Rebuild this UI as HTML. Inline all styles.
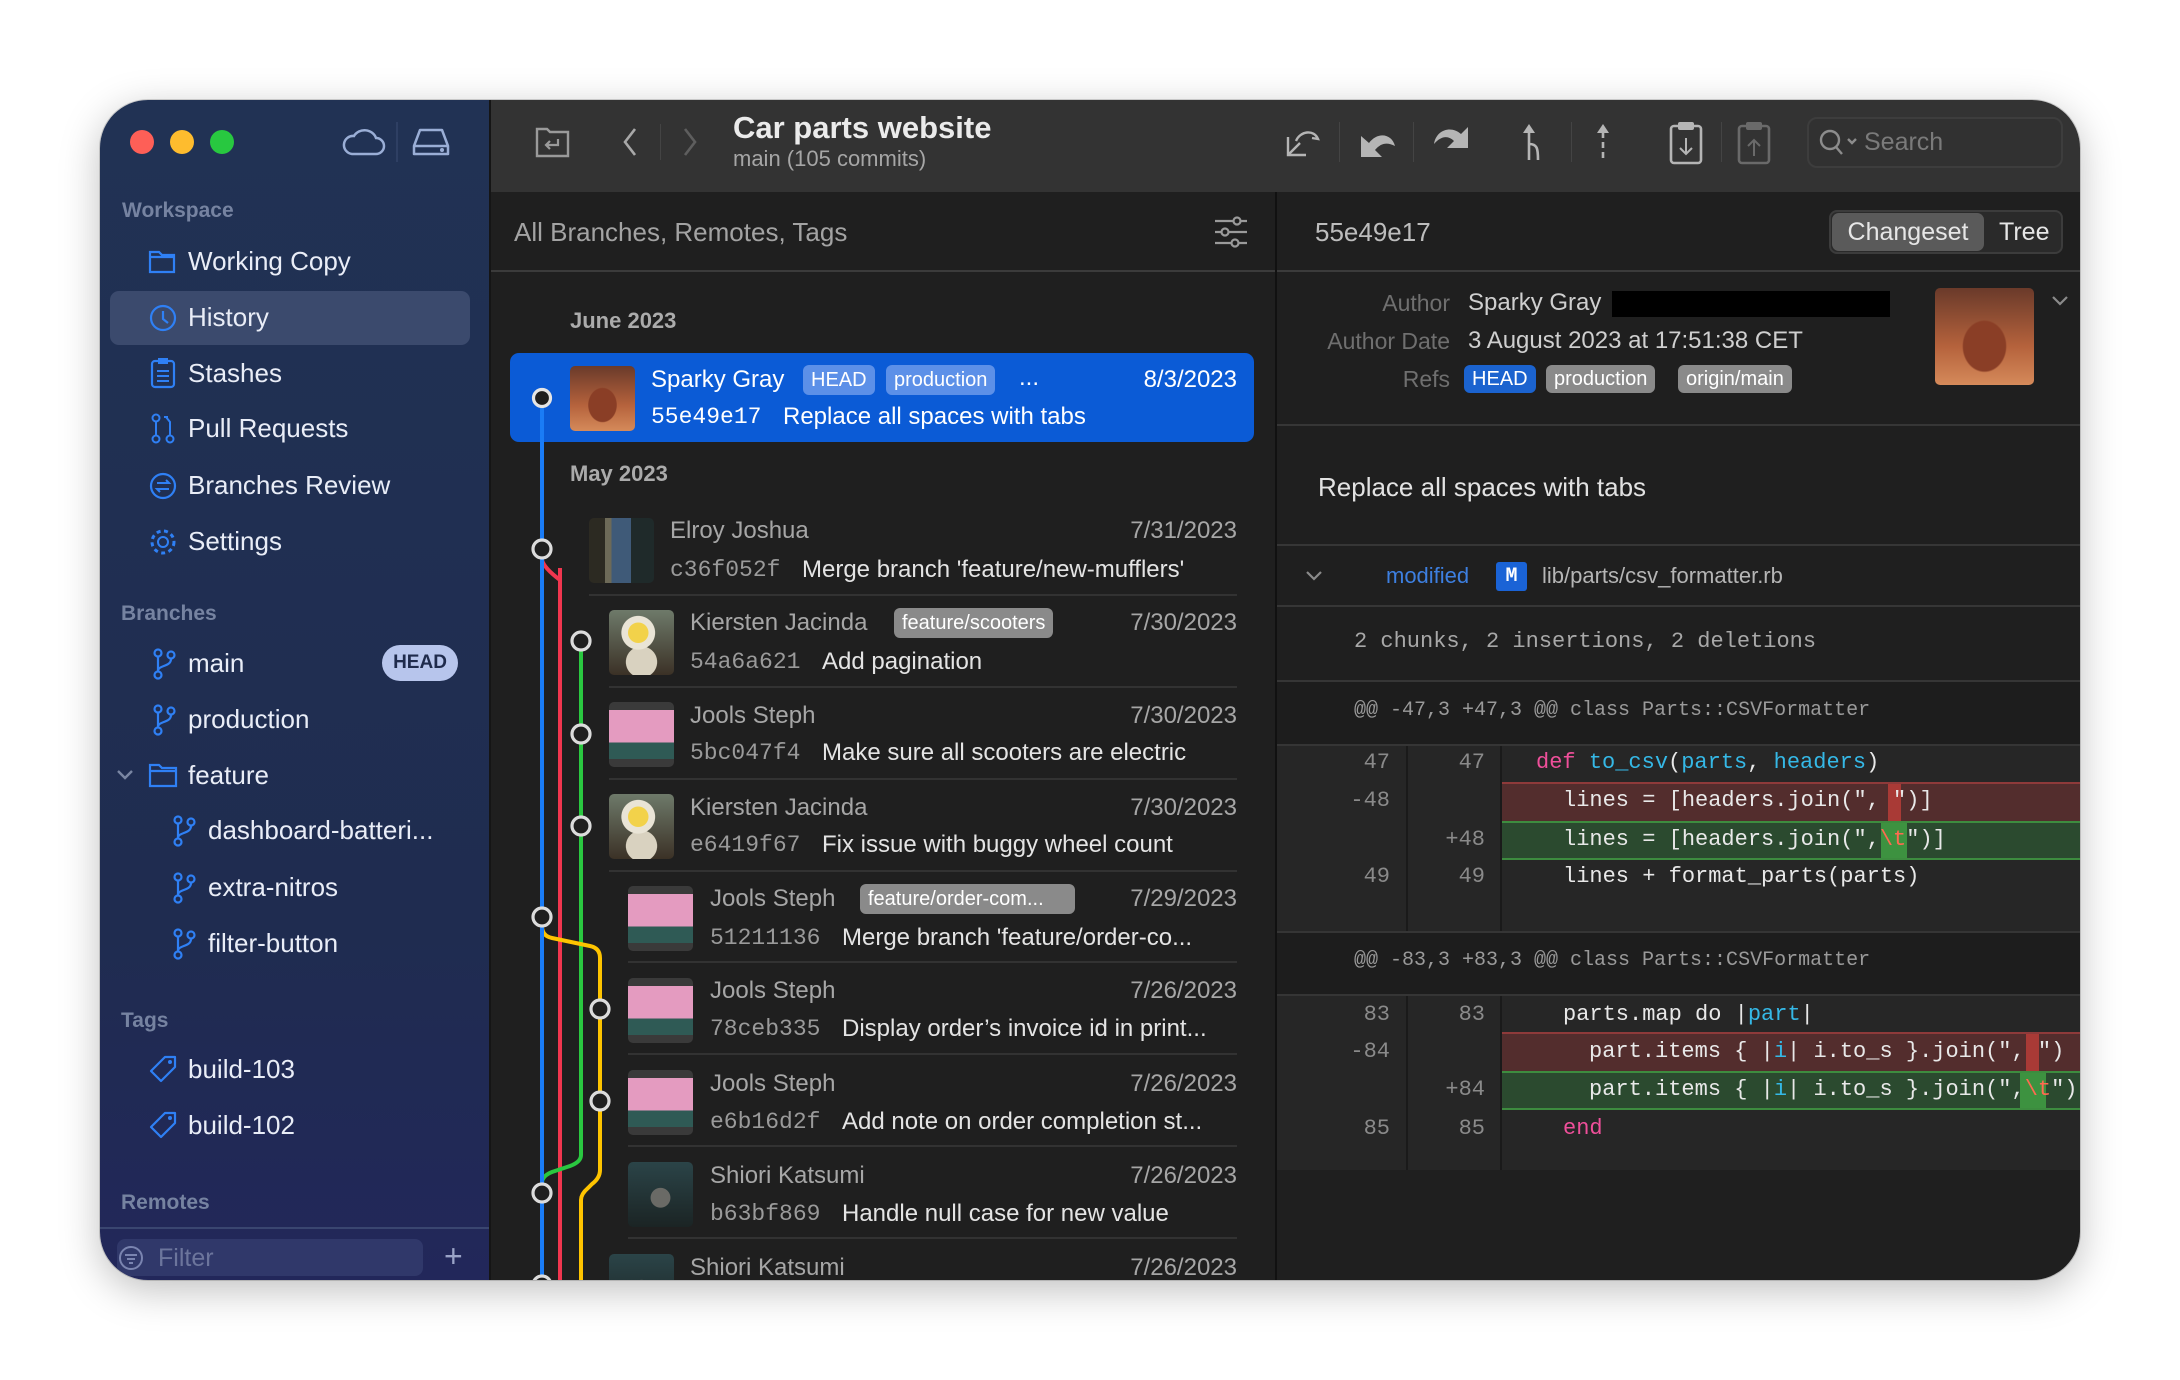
<!DOCTYPE html>
<html><head><meta charset="utf-8"><style>
*{margin:0;padding:0;box-sizing:border-box}
body{width:2180px;height:1380px;background:#fff;font-family:"Liberation Sans",sans-serif;position:relative;overflow:hidden}
#win{position:absolute;left:100px;top:100px;width:1980px;height:1180px;border-radius:48px;overflow:hidden;box-shadow:0 10px 40px rgba(0,0,0,.25),0 0 0 1px rgba(0,0,0,.15)}
#in{position:absolute;left:-100px;top:-100px;width:2180px;height:1380px}
.a{position:absolute;white-space:nowrap}
.t{position:absolute;white-space:nowrap;line-height:32px;height:32px}
.m{font-family:"Liberation Mono",monospace}
.side{color:#e9edf7;font-size:26px}
.sh{color:#7683a1;font-size:21px;font-weight:bold}
.nm{color:#a6a6a6;font-size:24px}
.hs{color:#9a9a9a;font-size:23px;font-family:"Liberation Mono",monospace}
.ms{color:#e4e4e4;font-size:24px}
.dt{color:#a6a6a6;font-size:24px;text-align:right;width:200px}
.pill{position:absolute;height:30px;line-height:30px;border-radius:6px;font-size:20px;color:#fff;padding:0 8px;background:#8a8a8a;white-space:nowrap;overflow:hidden}
.av{position:absolute;width:65px;height:65px;border-radius:5px;overflow:hidden}
.sep{position:absolute;height:2px;background:#323232}
.pink{background:linear-gradient(180deg,#3a3a3a 0 12%,#e49bc0 12% 62%,#2f5a55 62% 88%,#3a3a3a 88%)}
.helm{background:radial-gradient(circle at 45% 35%,#f2d24a 0 18%,#e9e4d6 19% 30%,transparent 31%),radial-gradient(circle at 50% 80%,#d9d2c0 0 25%,transparent 26%),linear-gradient(#6e7a6a,#3b3126)}
.shi{background:radial-gradient(circle at 50% 55%,#6a6a66 0 20%,transparent 21%),linear-gradient(#2b4448,#1b2424)}
.elr{background:linear-gradient(90deg,#2c2a22 0 25%,#6d6a58 25% 35%,#3f5a78 35% 65%,#1f2a2a 65%)}
.car{background:radial-gradient(ellipse at 50% 60%,#8a3e26 0 30%,transparent 32%),linear-gradient(#6a3a2a,#b5623c 60%,#d58a5a)}
.code{position:absolute;font-family:"Liberation Mono",monospace;font-size:22px;color:#e8e8e8;line-height:38px;height:38px;white-space:pre}
.ln{position:absolute;font-family:"Liberation Mono",monospace;font-size:22px;color:#8a8a8a;line-height:38px;height:38px;text-align:right;width:60px}
</style></head><body>
<div id="win"><div id="in">
<div class="a" style="left:100px;top:100px;width:389px;height:1180px;background:linear-gradient(180deg,#213254 0%,#1f2c50 70%,#22275a 100%)"></div>
<div class="a" style="left:130px;top:130px;width:24px;height:24px;border-radius:50%;background:#fe5f57"></div>
<div class="a" style="left:170px;top:130px;width:24px;height:24px;border-radius:50%;background:#febc2e"></div>
<div class="a" style="left:210px;top:130px;width:24px;height:24px;border-radius:50%;background:#28c840"></div>
<svg class="a" style="left:342px;top:126px" width="44" height="32" viewBox="0 0 44 32"><path d="M10 28 H34 a8 8 0 0 0 0-16 a12 11 0 0 0-22-2 a9 9 0 0 0-2 18z" fill="none" stroke="#9aaed6" stroke-width="2.5"/></svg>
<div class="a" style="left:396px;top:122px;width:2px;height:40px;background:#2e3f63"></div>
<svg class="a" style="left:410px;top:126px" width="42" height="32" viewBox="0 0 42 32"><path d="M4 20 L10 4 H32 L38 20 M4 20 H38 V28 H4z" fill="none" stroke="#9aaed6" stroke-width="2.5" stroke-linejoin="round"/><circle cx="32" cy="24" r="2" fill="#9aaed6"/></svg>

<div class="t sh" style="left:122px;top:195px">Workspace</div>
<div class="a" style="left:110px;top:291px;width:360px;height:54px;border-radius:9px;background:#3b4a6d"></div>
<svg class="a" style="left:148px;top:248px" width="28" height="26"><path d="M2 4h9l3 3h12v17H2z M2 9h24" fill="none" stroke="#2f80f5" stroke-width="2.2"/></svg>
<svg class="a" style="left:148px;top:303px" width="30" height="30"><circle cx="15" cy="15" r="12" fill="none" stroke="#2f80f5" stroke-width="2.2"/><path d="M15 8v8l5 4" fill="none" stroke="#2f80f5" stroke-width="2.2"/></svg>
<svg class="a" style="left:150px;top:357px" width="26" height="32"><rect x="2" y="4" width="22" height="26" rx="3" fill="none" stroke="#2f80f5" stroke-width="2.2"/><rect x="8" y="1" width="10" height="6" fill="#2f80f5"/><path d="M7 14h12M7 19h12M7 24h12" stroke="#2f80f5" stroke-width="2"/></svg>
<svg class="a" style="left:150px;top:412px" width="26" height="32"><circle cx="6" cy="6" r="3.5" fill="none" stroke="#2f80f5" stroke-width="2"/><circle cx="6" cy="27" r="3.5" fill="none" stroke="#2f80f5" stroke-width="2"/><circle cx="20" cy="27" r="3.5" fill="none" stroke="#2f80f5" stroke-width="2"/><path d="M6 10v13M20 23V10l-4-5M14 5h4" fill="none" stroke="#2f80f5" stroke-width="2"/></svg>
<svg class="a" style="left:148px;top:471px" width="30" height="30"><circle cx="15" cy="15" r="12" fill="none" stroke="#2f80f5" stroke-width="2.2"/><path d="M9 12h12l-3-3M21 18H9l3 3" fill="none" stroke="#2f80f5" stroke-width="2"/></svg>
<svg class="a" style="left:147px;top:526px" width="32" height="32"><circle cx="16" cy="16" r="5" fill="none" stroke="#2f80f5" stroke-width="2"/><circle cx="16" cy="16" r="11" fill="none" stroke="#2f80f5" stroke-width="3" stroke-dasharray="4 3.5"/></svg>
<div class="t side" style="left:188px;top:245px">Working Copy</div>
<div class="t side" style="left:188px;top:301px">History</div>
<div class="t side" style="left:188px;top:357px">Stashes</div>
<div class="t side" style="left:188px;top:412px">Pull Requests</div>
<div class="t side" style="left:188px;top:469px">Branches Review</div>
<div class="t side" style="left:188px;top:525px">Settings</div>

<div class="t sh" style="left:121px;top:598px">Branches</div>
<svg class="a" style="left:152px;top:648px" width="24" height="32"><g fill="none" stroke="#2f80f5" stroke-width="2.2"><circle cx="6" cy="5" r="3.5"/><circle cx="6" cy="27" r="3.5"/><circle cx="19" cy="7" r="3.5"/><path d="M6 9v14M19 11c0 8-13 6-13 12"/></g></svg>
<svg class="a" style="left:152px;top:704px" width="24" height="32"><g fill="none" stroke="#2f80f5" stroke-width="2.2"><circle cx="6" cy="5" r="3.5"/><circle cx="6" cy="27" r="3.5"/><circle cx="19" cy="7" r="3.5"/><path d="M6 9v14M19 11c0 8-13 6-13 12"/></g></svg>
<svg class="a" style="left:116px;top:768px" width="18" height="14"><path d="M2 3l7 7 7-7" fill="none" stroke="#7a86a3" stroke-width="2.4"/></svg>
<svg class="a" style="left:148px;top:762px" width="30" height="26"><path d="M2 3h9l3 3h14v18H2z M2 9h26" fill="none" stroke="#2f80f5" stroke-width="2.2"/></svg>
<svg class="a" style="left:172px;top:815px" width="24" height="32"><g fill="none" stroke="#2f80f5" stroke-width="2.2"><circle cx="6" cy="5" r="3.5"/><circle cx="6" cy="27" r="3.5"/><circle cx="19" cy="7" r="3.5"/><path d="M6 9v14M19 11c0 8-13 6-13 12"/></g></svg>
<svg class="a" style="left:172px;top:872px" width="24" height="32"><g fill="none" stroke="#2f80f5" stroke-width="2.2"><circle cx="6" cy="5" r="3.5"/><circle cx="6" cy="27" r="3.5"/><circle cx="19" cy="7" r="3.5"/><path d="M6 9v14M19 11c0 8-13 6-13 12"/></g></svg>
<svg class="a" style="left:172px;top:928px" width="24" height="32"><g fill="none" stroke="#2f80f5" stroke-width="2.2"><circle cx="6" cy="5" r="3.5"/><circle cx="6" cy="27" r="3.5"/><circle cx="19" cy="7" r="3.5"/><path d="M6 9v14M19 11c0 8-13 6-13 12"/></g></svg>
<div class="t side" style="left:188px;top:647px">main</div>
<div class="a" style="left:382px;top:645px;width:76px;height:36px;border-radius:18px;background:#b7c5ec;color:#1f2b4c;font-size:19px;font-weight:bold;text-align:center;line-height:36px">HEAD</div>
<div class="t side" style="left:188px;top:703px">production</div>
<div class="t side" style="left:188px;top:759px">feature</div>
<div class="t side" style="left:208px;top:814px">dashboard-batteri...</div>
<div class="t side" style="left:208px;top:871px">extra-nitros</div>
<div class="t side" style="left:208px;top:927px">filter-button</div>

<div class="t sh" style="left:121px;top:1005px">Tags</div>
<svg class="a" style="left:147px;top:1053px" width="32" height="32"><path d="M4 18 L18 4 H28 V14 L14 28 z" fill="none" stroke="#2f80f5" stroke-width="2.2" stroke-linejoin="round"/><circle cx="23" cy="9" r="2" fill="#2f80f5"/></svg>
<svg class="a" style="left:147px;top:1109px" width="32" height="32"><path d="M4 18 L18 4 H28 V14 L14 28 z" fill="none" stroke="#2f80f5" stroke-width="2.2" stroke-linejoin="round"/><circle cx="23" cy="9" r="2" fill="#2f80f5"/></svg>
<div class="t side" style="left:188px;top:1053px">build-103</div>
<div class="t side" style="left:188px;top:1109px">build-102</div>
<div class="t sh" style="left:121px;top:1187px">Remotes</div>
<div class="a" style="left:100px;top:1227px;width:389px;height:2px;background:#3a4670"></div>
<div class="a" style="left:117px;top:1239px;width:306px;height:37px;border-radius:8px;background:#30386a"></div>
<svg class="a" style="left:118px;top:1245px" width="26" height="26"><circle cx="13" cy="13" r="11" fill="none" stroke="#7a84b0" stroke-width="2"/><path d="M7 10h12M9 14h8M11 18h4" stroke="#7a84b0" stroke-width="2"/></svg>
<div class="t" style="left:158px;top:1242px;font-size:25px;color:#6c759c">Filter</div>
<div class="t" style="left:444px;top:1240px;font-size:32px;color:#9aa3c7">+</div>

<div class="a" style="left:489px;top:100px;width:1591px;height:92px;background:#333"></div>
<div class="a" style="left:489px;top:100px;width:2px;height:1180px;background:#151515"></div>
<svg class="a" style="left:534px;top:124px" width="38" height="36"><path d="M3 5h10l3 3h18v24H3z" fill="none" stroke="#9a9a9a" stroke-width="2.4"/><path d="M24 15v6H13m3-4-4 4 4 4" fill="none" stroke="#9a9a9a" stroke-width="2.2"/></svg>
<svg class="a" style="left:620px;top:126px" width="20" height="32"><path d="M15 3L5 16l10 13" fill="none" stroke="#a8a8a8" stroke-width="2.6"/></svg>
<div class="a" style="left:660px;top:124px;width:1px;height:36px;background:#444"></div>
<svg class="a" style="left:680px;top:126px" width="20" height="32"><path d="M5 3l10 13L5 29" fill="none" stroke="#5e5e5e" stroke-width="2.6"/></svg>
<div class="a" style="left:733px;top:108px;font-size:31px;font-weight:bold;color:#ebebeb;line-height:40px">Car parts website</div>
<div class="a" style="left:733px;top:145px;font-size:22px;color:#a6a6a6;line-height:28px">main (105 commits)</div>
<svg class="a" style="left:1284px;top:125px" width="38" height="34"><path d="M4 12v18h18 M4 30 L16 18 M12 16 c4-10 18-12 22-2 l-6 -1" fill="none" stroke="#b5b5b5" stroke-width="2.4"/></svg>
<div class="a" style="left:1339px;top:122px;width:1px;height:40px;background:#444"></div>
<svg class="a" style="left:1358px;top:124px" width="40" height="36"><path d="M3 12 V33 H24 L17 26 C23 19 29 18 37 22 C34 10 20 7 11 19 Z" fill="#b5b5b5"/></svg>
<div class="a" style="left:1413px;top:122px;width:1px;height:40px;background:#444"></div>
<svg class="a" style="left:1431px;top:124px" width="40" height="36"><path d="M37 3 V24 H16 L23 17 C17 11 10 12 3 20 C5 6 20 1 30 10 Z" fill="#b5b5b5"/></svg>
<svg class="a" style="left:1520px;top:122px" width="26" height="40"><path d="M9 2l-6 9h12z" fill="#b5b5b5"/><path d="M9 10v28 M9 22c8 0 9 4 9 16" fill="none" stroke="#b5b5b5" stroke-width="2.6"/></svg>
<div class="a" style="left:1571px;top:122px;width:1px;height:40px;background:#444"></div>
<svg class="a" style="left:1592px;top:122px" width="22" height="42"><path d="M11 2l-6 9h12z" fill="#b5b5b5"/><path d="M11 10v30" stroke="#b5b5b5" stroke-width="2.6" stroke-dasharray="6 4"/></svg>
<svg class="a" style="left:1668px;top:120px" width="36" height="46"><rect x="3" y="6" width="30" height="37" rx="3" fill="none" stroke="#b5b5b5" stroke-width="2.6"/><rect x="10" y="2" width="16" height="8" rx="2" fill="#b5b5b5"/><path d="M18 18v16m-6-6 6 6 6-6" fill="none" stroke="#b5b5b5" stroke-width="2"/></svg>
<div class="a" style="left:1721px;top:122px;width:1px;height:40px;background:#444"></div>
<svg class="a" style="left:1736px;top:120px" width="36" height="46"><rect x="3" y="6" width="30" height="37" rx="3" fill="none" stroke="#6a6a6a" stroke-width="2.6"/><rect x="10" y="2" width="16" height="8" rx="2" fill="#6a6a6a"/><path d="M18 36V20m-6 6 6-6 6 6" fill="none" stroke="#6a6a6a" stroke-width="2"/></svg>
<div class="a" style="left:1807px;top:117px;width:256px;height:51px;border-radius:10px;border:2px solid #3d3d3d;background:#313131"></div>
<svg class="a" style="left:1818px;top:128px" width="44" height="30"><circle cx="12" cy="12" r="9" fill="none" stroke="#8c8c8c" stroke-width="2.4"/><path d="M18 19l6 7M30 11l4 4 4-4" fill="none" stroke="#8c8c8c" stroke-width="2.4"/></svg>
<div class="a" style="left:1864px;top:126px;font-size:25px;color:#7a7a7a;line-height:32px">Search</div>

<div class="a" style="left:491px;top:192px;width:784px;height:1088px;background:#1f1f1f"></div>
<div class="a" style="left:514px;top:216px;font-size:26px;color:#a3a3a3;line-height:32px">All Branches, Remotes, Tags</div>
<svg class="a" style="left:1213px;top:214px" width="36" height="36"><g stroke="#9a9a9a" stroke-width="2.2" fill="#1f1f1f"><path d="M2 7h32M2 18h32M2 29h32"/><circle cx="24" cy="7" r="3.5"/><circle cx="12" cy="18" r="3.5"/><circle cx="22" cy="29" r="3.5"/></g></svg>
<div class="a" style="left:491px;top:270px;width:784px;height:2px;background:#3b3b3b"></div>
<div class="a" style="left:570px;top:306px;font-size:22px;font-weight:bold;color:#ababab;line-height:30px">June 2023</div>
<div class="a" style="left:510px;top:353px;width:744px;height:89px;border-radius:9px;background:#0b5bd6"></div>
<div class="av car" style="left:570px;top:366px"></div>
<div class="t" style="left:651px;top:364px;font-size:24px;color:#fff">Sparky Gray</div>
<div class="pill" style="left:803px;top:365px;background:#5c90e8">HEAD</div>
<div class="pill" style="left:886px;top:365px;background:#5c90e8">production</div>
<div class="t" style="left:1019px;top:362px;font-size:24px;color:#fff">...</div>
<div class="t dt" style="left:1037px;top:364px;color:#fff">8/3/2023</div>
<div class="t" style="left:651px;top:401px;font-size:23px;color:#fff;font-family:'Liberation Mono',monospace">55e49e17</div>
<div class="t" style="left:783px;top:401px;font-size:24px;color:#fff">Replace all spaces with tabs</div>
<div class="a" style="left:570px;top:459px;font-size:22px;font-weight:bold;color:#ababab;line-height:30px">May 2023</div>

<svg class="a" style="left:491px;top:192px" width="200" height="1088" viewBox="491 192 200 1088">
<g fill="none" stroke-width="4">
<path d="M560 568 C560 575 560 580 560 590 V1290" stroke="#f0364f"/>
<path d="M542 560 Q544 568 560 580" stroke="#f0364f"/>
<path d="M581 641 V1155 Q581 1162 570 1166 L552 1172 Q542 1176 542 1183" stroke="#2ac840"/>
<path d="M542 926 Q542 936 552 938 L590 946 Q600 948 600 958 V1170 Q600 1178 592 1184 L588 1188 Q581 1194 581 1200 V1290" stroke="#fec400"/>
<path d="M542 398 V1290" stroke="#1a7cf6"/>
</g>
<g fill="#1f1f1f" stroke="#dcdcdc" stroke-width="3.2">
<circle cx="542" cy="549" r="9"/><circle cx="581" cy="641" r="9"/><circle cx="581" cy="734" r="9"/><circle cx="581" cy="826" r="9"/><circle cx="542" cy="917" r="9"/><circle cx="600" cy="1009" r="9"/><circle cx="600" cy="1101" r="9"/><circle cx="542" cy="1193" r="9"/><circle cx="542" cy="1285" r="9"/>
</g>
</svg>
<svg class="a" style="left:530px;top:386px" width="24" height="24"><circle cx="12" cy="12" r="8.5" fill="#1f1f1f" stroke="#e5e5e5" stroke-width="3.2"/></svg>

<div class="av elr" style="left:589px;top:518px"></div>
<div class="t nm" style="left:670px;top:515px">Elroy Joshua</div><div class="t dt" style="left:1037px;top:515px">7/31/2023</div>
<div class="t hs" style="left:670px;top:554px">c36f052f</div><div class="t ms" style="left:802px;top:554px">Merge branch 'feature/new-mufflers'</div>
<div class="sep" style="left:589px;top:594px;width:648px"></div>

<div class="av helm" style="left:609px;top:610px"></div>
<div class="t nm" style="left:690px;top:607px">Kiersten Jacinda</div><div class="pill" style="left:894px;top:608px">feature/scooters</div><div class="t dt" style="left:1037px;top:607px">7/30/2023</div>
<div class="t hs" style="left:690px;top:646px">54a6a621</div><div class="t ms" style="left:822px;top:646px">Add pagination</div>
<div class="sep" style="left:609px;top:686px;width:628px"></div>

<div class="av pink" style="left:609px;top:702px"></div>
<div class="t nm" style="left:690px;top:700px">Jools Steph</div><div class="t dt" style="left:1037px;top:700px">7/30/2023</div>
<div class="t hs" style="left:690px;top:737px">5bc047f4</div><div class="t ms" style="left:822px;top:737px">Make sure all scooters are electric</div>
<div class="sep" style="left:609px;top:778px;width:628px"></div>

<div class="av helm" style="left:609px;top:794px"></div>
<div class="t nm" style="left:690px;top:792px">Kiersten Jacinda</div><div class="t dt" style="left:1037px;top:792px">7/30/2023</div>
<div class="t hs" style="left:690px;top:829px">e6419f67</div><div class="t ms" style="left:822px;top:829px">Fix issue with buggy wheel count</div>
<div class="sep" style="left:609px;top:870px;width:628px"></div>

<div class="av pink" style="left:628px;top:886px"></div>
<div class="t nm" style="left:710px;top:883px">Jools Steph</div><div class="pill" style="left:860px;top:884px;width:215px">feature/order-com...</div><div class="t dt" style="left:1037px;top:883px">7/29/2023</div>
<div class="t hs" style="left:710px;top:922px">51211136</div><div class="t ms" style="left:842px;top:922px">Merge branch 'feature/order-co...</div>
<div class="sep" style="left:628px;top:961px;width:609px"></div>

<div class="av pink" style="left:628px;top:978px"></div>
<div class="t nm" style="left:710px;top:975px">Jools Steph</div><div class="t dt" style="left:1037px;top:975px">7/26/2023</div>
<div class="t hs" style="left:710px;top:1013px">78ceb335</div><div class="t ms" style="left:842px;top:1013px">Display order’s invoice id in print...</div>
<div class="sep" style="left:628px;top:1053px;width:609px"></div>

<div class="av pink" style="left:628px;top:1070px"></div>
<div class="t nm" style="left:710px;top:1068px">Jools Steph</div><div class="t dt" style="left:1037px;top:1068px">7/26/2023</div>
<div class="t hs" style="left:710px;top:1106px">e6b16d2f</div><div class="t ms" style="left:842px;top:1106px">Add note on order completion st...</div>
<div class="sep" style="left:628px;top:1145px;width:609px"></div>

<div class="av shi" style="left:628px;top:1162px"></div>
<div class="t nm" style="left:710px;top:1160px">Shiori Katsumi</div><div class="t dt" style="left:1037px;top:1160px">7/26/2023</div>
<div class="t hs" style="left:710px;top:1198px">b63bf869</div><div class="t ms" style="left:842px;top:1198px">Handle null case for new value</div>
<div class="sep" style="left:628px;top:1237px;width:609px"></div>

<div class="av shi" style="left:609px;top:1254px"></div>
<div class="t nm" style="left:690px;top:1252px">Shiori Katsumi</div><div class="t dt" style="left:1037px;top:1252px">7/26/2023</div>

<div class="a" style="left:1275px;top:192px;width:2px;height:1088px;background:#111"></div>
<div class="a" style="left:1277px;top:192px;width:803px;height:1088px;background:#1f1f1f"></div>
<div class="a" style="left:1315px;top:216px;font-size:26px;color:#bdbdbd;line-height:32px">55e49e17</div>
<div class="a" style="left:1829px;top:210px;width:234px;height:44px;border-radius:8px;border:2px solid #3c3c3c;background:#2a2a2a"></div>
<div class="a" style="left:1832px;top:213px;width:152px;height:38px;border-radius:7px;background:#5a5a5a"></div>
<div class="a" style="left:1832px;top:216px;width:152px;font-size:25px;color:#e6e6e6;line-height:32px;text-align:center">Changeset</div>
<div class="a" style="left:1999px;top:216px;font-size:25px;color:#e6e6e6;line-height:32px">Tree</div>
<div class="a" style="left:1277px;top:270px;width:803px;height:2px;background:#3b3b3b"></div>

<div class="t" style="left:1250px;top:287px;width:200px;text-align:right;font-size:23px;color:#6f6f6f">Author</div>
<div class="t" style="left:1250px;top:325px;width:200px;text-align:right;font-size:23px;color:#6f6f6f">Author Date</div>
<div class="t" style="left:1250px;top:363px;width:200px;text-align:right;font-size:23px;color:#6f6f6f">Refs</div>
<div class="t" style="left:1468px;top:287px;font-size:24px;color:#cfcfcf">Sparky Gray</div>
<div class="a" style="left:1612px;top:291px;width:278px;height:26px;background:#000"></div>
<div class="t" style="left:1468px;top:325px;font-size:24px;color:#cfcfcf">3 August 2023 at 17:51:38 CET</div>
<div class="pill" style="left:1464px;top:365px;height:28px;line-height:28px;background:#1b63cf;font-size:20px">HEAD</div>
<div class="pill" style="left:1546px;top:365px;height:28px;line-height:28px;background:#8a8a8a;font-size:20px">production</div>
<div class="pill" style="left:1678px;top:365px;height:28px;line-height:28px;background:#8a8a8a;font-size:20px">origin/main</div>
<div class="av car" style="left:1935px;top:288px;width:99px;height:97px"></div>
<svg class="a" style="left:2051px;top:294px" width="18" height="14"><path d="M2 3l7 7 7-7" fill="none" stroke="#8a8a8a" stroke-width="2.2"/></svg>
<div class="a" style="left:1277px;top:424px;width:803px;height:2px;background:#363636"></div>
<div class="t" style="left:1318px;top:471px;font-size:26px;color:#e2e2e2">Replace all spaces with tabs</div>
<div class="a" style="left:1277px;top:544px;width:803px;height:2px;background:#363636"></div>
<svg class="a" style="left:1305px;top:569px" width="18" height="14"><path d="M2 3l7 7 7-7" fill="none" stroke="#8a8a8a" stroke-width="2.2"/></svg>
<div class="t" style="left:1386px;top:560px;font-size:22px;color:#3d7fe0">modified</div>
<div class="a" style="left:1496px;top:562px;width:31px;height:29px;border-radius:3px;background:#1a63d6;color:#fff;font-family:'Liberation Mono',monospace;font-weight:bold;font-size:20px;text-align:center;line-height:29px">M</div>
<div class="t" style="left:1542px;top:560px;font-size:22px;color:#b5b5b5">lib/parts/csv_formatter.rb</div>
<div class="a" style="left:1277px;top:605px;width:803px;height:2px;background:#363636"></div>
<div class="t m" style="left:1354px;top:626px;font-size:22px;color:#a8a8a8">2 chunks, 2 insertions, 2 deletions</div>
<div class="a" style="left:1277px;top:680px;width:803px;height:2px;background:#363636"></div>
<div class="a" style="left:1277px;top:682px;width:803px;height:62px;background:#1d1d1d"></div>
<div class="t m" style="left:1354px;top:695px;font-size:20px;color:#9a9a9a">@@ -47,3 +47,3 @@ class Parts::CSVFormatter</div>
<div class="a" style="left:1277px;top:744px;width:803px;height:187px;background:#262626;border-top:2px solid #353535"></div>
<div class="a" style="left:1406px;top:746px;width:2px;height:185px;background:#1a1a1a"></div>
<div class="a" style="left:1500px;top:746px;width:2px;height:185px;background:#1a1a1a"></div>
<div class="a" style="left:1502px;top:782px;width:578px;height:39px;background:#532d2d;border-top:2px solid #8e3a3a"></div>
<div class="a" style="left:1502px;top:821px;width:578px;height:39px;background:#2b4a2f;border-top:2px solid #3d8c3f;border-bottom:2px solid #3d8c3f"></div>
<div class="a" style="left:1888px;top:784px;width:13px;height:37px;background:#a93a36"></div>
<div class="a" style="left:1881px;top:823px;width:26px;height:35px;background:#3d9240"></div>
<div class="ln" style="left:1330px;top:744px">47</div><div class="ln" style="left:1425px;top:744px">47</div>
<div class="ln" style="left:1330px;top:782px">-48</div>
<div class="ln" style="left:1425px;top:821px">+48</div>
<div class="ln" style="left:1330px;top:858px">49</div><div class="ln" style="left:1425px;top:858px">49</div>
<div class="code" style="left:1536px;top:744px"><span style="color:#ef4f9a">def</span> <span style="color:#35b8e6">to_csv</span>(<span style="color:#35b8e6">parts</span>, <span style="color:#35b8e6">headers</span>)</div>
<div class="code" style="left:1563px;top:782px">lines = [headers.join(", ")]</div>
<div class="code" style="left:1563px;top:821px">lines = [headers.join(",<span style="color:#ff6a50">\t</span>")]</div>
<div class="code" style="left:1563px;top:858px">lines + format_parts(parts)</div>
<div class="a" style="left:1277px;top:931px;width:803px;height:63px;background:#1d1d1d;border-top:2px solid #353535"></div>
<div class="t m" style="left:1354px;top:945px;font-size:20px;color:#9a9a9a">@@ -83,3 +83,3 @@ class Parts::CSVFormatter</div>
<div class="a" style="left:1277px;top:994px;width:803px;height:176px;background:#262626;border-top:2px solid #353535"></div>
<div class="a" style="left:1406px;top:996px;width:2px;height:174px;background:#1a1a1a"></div>
<div class="a" style="left:1500px;top:996px;width:2px;height:174px;background:#1a1a1a"></div>
<div class="a" style="left:1502px;top:1032px;width:578px;height:39px;background:#532d2d;border-top:2px solid #8e3a3a"></div>
<div class="a" style="left:1502px;top:1071px;width:578px;height:39px;background:#2b4a2f;border-top:2px solid #3d8c3f;border-bottom:2px solid #3d8c3f"></div>
<div class="a" style="left:2026px;top:1034px;width:13px;height:37px;background:#a93a36"></div>
<div class="a" style="left:2020px;top:1073px;width:26px;height:35px;background:#3d9240"></div>
<div class="ln" style="left:1330px;top:996px">83</div><div class="ln" style="left:1425px;top:996px">83</div>
<div class="ln" style="left:1330px;top:1033px">-84</div>
<div class="ln" style="left:1425px;top:1071px">+84</div>
<div class="ln" style="left:1330px;top:1110px">85</div><div class="ln" style="left:1425px;top:1110px">85</div>
<div class="code" style="left:1563px;top:996px">parts.map do |<span style="color:#35b8e6">part</span>|</div>
<div class="code" style="left:1589px;top:1033px">part.items { |<span style="color:#35b8e6">i</span>| i.to_s }.join(", ")</div>
<div class="code" style="left:1589px;top:1071px">part.items { |<span style="color:#35b8e6">i</span>| i.to_s }.join(",<span style="color:#ff6a50">\t</span>")</div>
<div class="code" style="left:1563px;top:1110px;color:#ef4f9a">end</div>
</div></div>
</body></html>
